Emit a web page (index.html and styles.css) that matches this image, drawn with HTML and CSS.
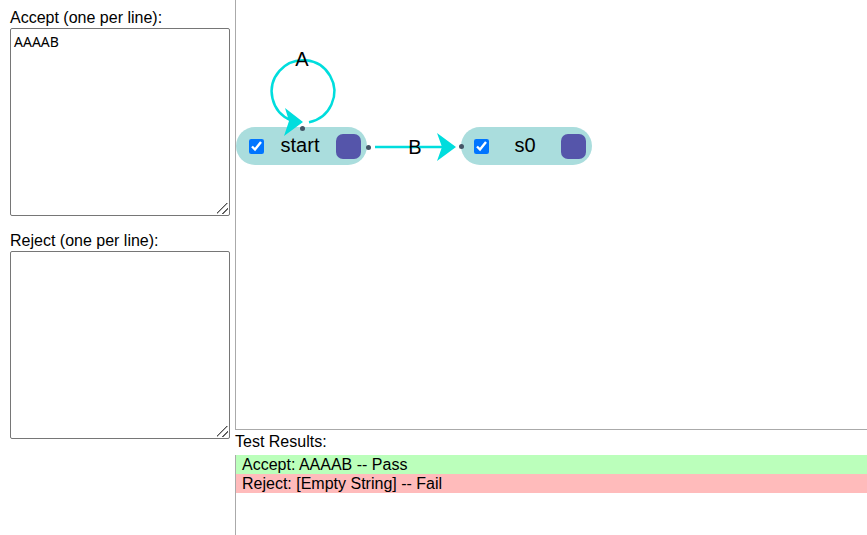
FILE: index.html
```html
<!DOCTYPE html>
<html lang="en">
<head>
<meta charset="utf-8">
<title>State Machine Tester</title>
<link rel="stylesheet" href="styles.css">
</head>
<body>
<div class="app">
  <aside class="inputs">
    <div class="field">
      <label for="accept">Accept (one per line):</label>
      <textarea id="accept" spellcheck="false">AAAAB</textarea>
    </div>
    <div class="field">
      <label for="reject">Reject (one per line):</label>
      <textarea id="reject" spellcheck="false"></textarea>
    </div>
  </aside>
  <main class="workspace">
    <section class="canvas" aria-label="State diagram">
      <div class="node node-start">
        <input type="checkbox" checked aria-label="start accepts">
        <span class="name">start</span>
        <button class="handle" type="button" aria-label="Connect start"></button>
      </div>
      <div class="node node-s0">
        <input type="checkbox" checked aria-label="s0 accepts">
        <span class="name">s0</span>
        <button class="handle" type="button" aria-label="Connect s0"></button>
      </div>
      <svg class="edges" aria-hidden="true">
        <g class="line">
          <path d="M73 122.200A31.300 31.300 0 1 0 55 120.400"/>
          <path d="M139 147H208"/>
        </g>
        <g class="arrow">
          <path d="M67 122L49 108L53 121L48 136Z"/>
          <path d="M220 147L201 133L206 147L201 161Z"/>
        </g>
        <g class="port">
          <circle cx="66.500" cy="128.500" r="2.500"/>
          <circle cx="132.500" cy="147.500" r="2.500"/>
          <circle cx="225.500" cy="146.500" r="2.500"/>
        </g>
        <g class="edge-label">
          <text x="66" y="66">A</text>
          <text x="179" y="154">B</text>
        </g>
      </svg>
    </section>
    <section class="results">
      <h2>Test Results:</h2>
      <ul>
        <li class="pass">Accept: AAAAB -- Pass</li>
        <li class="fail">Reject: [Empty String] -- Fail</li>
      </ul>
    </section>
  </main>
</div>
</body>
</html>
```

FILE: styles.css
```css
* {
  box-sizing: border-box;
}

body {
  margin: 0;
  background: #fff;
  color: #000;
  font: 16px/19px "Liberation Sans", Arial, sans-serif;
}

.app {
  display: grid;
  grid-template-columns: 235px 1fr;
  height: 100vh;
}

.inputs {
  display: flex;
  flex-direction: column;
  gap: 15px;
  padding: 8px 5px 0 10px;
}

.field {
  display: flex;
  flex-direction: column;
}

.field label {
  line-height: 20px;
}

.field textarea {
  width: 100%;
  height: 188px;
  margin: 0;
  padding: 3px;
  border: 1px solid #767676;
  border-radius: 2px;
  background: #fff;
  color: #000;
  font: 14px/20px "Noto Sans", sans-serif;
  resize: both;
}

/* Two-stroke resize grip */
.field textarea::-webkit-resizer {
  background: linear-gradient(135deg, transparent 41%, #555 43%, #555 49%, transparent 51%, transparent 69%, #555 71%, #555 77%, transparent 79%) 3px 3px / 11px 11px no-repeat;
}

.workspace {
  display: grid;
  grid-template-rows: 1fr 105px;
  min-width: 0;
}

.canvas {
  position: relative;
  overflow: hidden;
  border-left: 1px solid #aaa;
  border-bottom: 1px solid #aaa;
}

.node {
  position: absolute;
  display: flex;
  align-items: center;
  width: 131px;
  height: 38px;
  padding: 0 6px 0 13px;
  border-radius: 19px;
  background: #add;
  font-size: 20px;
}

.node-start {
  left: 0;
  top: 127px;
}

.node-s0 {
  left: 225px;
  top: 127px;
}

.node input {
  width: 15px;
  height: 15px;
  margin: 0;
  accent-color: #0075ff;
}

.node .name {
  flex: 1;
  padding-bottom: 2px;
  text-align: center;
}

.node .handle {
  width: 25px;
  height: 25px;
  padding: 0;
  border: 0;
  border-radius: 7px;
  background: #55a;
}

.edges {
  position: absolute;
  inset: 0;
  width: 100%;
  height: 100%;
  pointer-events: none;
}

.line {
  fill: none;
  stroke: #0dd;
  stroke-width: 2.5;
}

.arrow {
  fill: #0dd;
}

.port {
  fill: #456;
}

.edge-label {
  fill: #000;
  font-size: 20px;
  text-anchor: middle;
}

.results {
  display: flex;
  flex-direction: column;
}

.results h2 {
  margin: 0;
  padding-bottom: 2px;
  font-size: 16px;
  font-weight: normal;
  line-height: 23px;
}

.results ul {
  flex: 1;
  margin: 0;
  padding: 0;
  border-left: 1px solid #aaa;
  list-style: none;
}

.results li {
  padding-left: 6px;
}

.pass {
  background: #bfb;
}

.fail {
  background: #fbb;
}
```
